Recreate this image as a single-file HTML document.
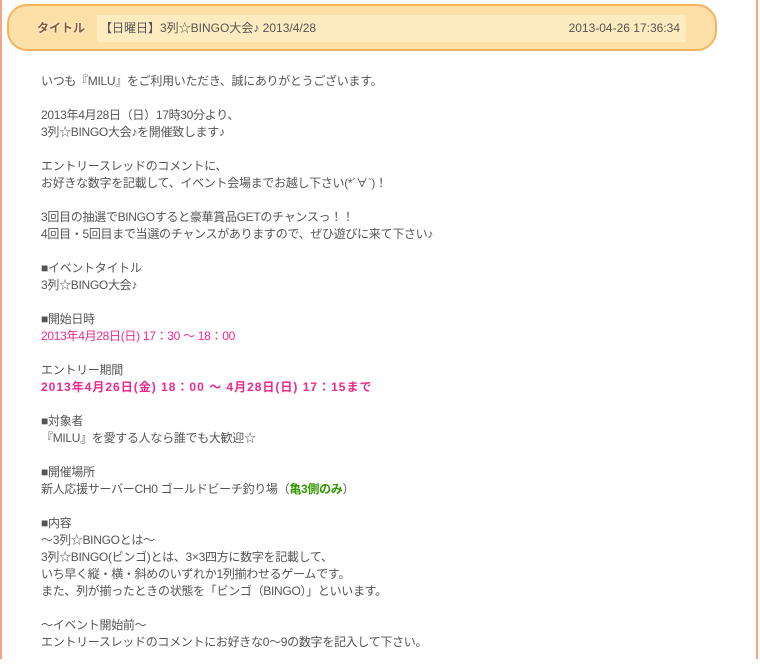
<!DOCTYPE html>
<html><head><meta charset="utf-8"><style>
html,body{margin:0;padding:0;background:#fff;}
body{width:760px;height:659px;overflow:hidden;position:relative;font-family:"Liberation Sans","Noto Sans CJK JP",sans-serif;}
.lb{position:absolute;left:0;top:0;width:2px;height:659px;background:#f4a48a;}
.rb{position:absolute;left:756px;top:0;width:2px;height:659px;background:#f4a48a;}
.hd{position:absolute;left:7px;top:4px;width:706px;height:43px;background:#fddfa8;border:2px solid #f7b35a;border-radius:20px;}
.lab{position:absolute;left:28px;top:13px;font-size:12px;font-weight:bold;color:#8a5a2a;text-shadow:0 0 2px #fff,0 0 2px #fff;}
.in{position:absolute;left:88px;top:9px;width:589px;height:27px;background:#feebbf;font-size:12px;color:#555;line-height:27px;}
.in .t{position:absolute;left:3px;}
.in .d{position:absolute;right:6px;}
.body{position:absolute;left:41px;top:73px;font-size:12px;line-height:17px;color:#555;letter-spacing:-0.3px;}
.body p{margin:0 0 17px 0;}
.pk{color:#f0288c;}
.b{font-weight:bold;letter-spacing:1px;}
.gr{color:#339900;font-weight:bold;}
</style></head><body>
<div class="lb"></div><div class="rb"></div>
<div class="hd"><div class="lab">タイトル</div>
<div class="in"><span class="t">【日曜日】3列☆BINGO大会♪ 2013/4/28</span><span class="d">2013-04-26 17:36:34</span></div></div>
<div class="body">
<p>いつも『MILU』をご利用いただき、誠にありがとうございます。</p>
<p>2013年4月28日（日）17時30分より、<br>3列☆BINGO大会♪を開催致します♪</p>
<p>エントリースレッドのコメントに、<br>お好きな数字を記載して、イベント会場までお越し下さい(*´∀`)！</p>
<p>3回目の抽選でBINGOすると豪華賞品GETのチャンスっ！！<br>4回目・5回目まで当選のチャンスがありますので、ぜひ遊びに来て下さい♪</p>
<p>■イベントタイトル<br>3列☆BINGO大会♪</p>
<p>■開始日時<br><span class="pk">2013年4月28日(日) 17：30 ～ 18：00</span></p>
<p>エントリー期間<br><span class="pk b">2013年4月26日(金) 18：00 ～ 4月28日(日) 17：15まで</span></p>
<p>■対象者<br>『MILU』を愛する人なら誰でも大歓迎☆</p>
<p>■開催場所<br>新人応援サーバーCH0 ゴールドビーチ釣り場（<span class="gr">亀3側のみ</span>）</p>
<p>■内容<br>～3列☆BINGOとは～<br>3列☆BINGO(ビンゴ)とは、3×3四方に数字を記載して、<br>いち早く縦・横・斜めのいずれか1列揃わせるゲームです。<br>また、列が揃ったときの状態を「ビンゴ（BINGO）」といいます。</p>
<p>～イベント開始前～<br>エントリースレッドのコメントにお好きな0～9の数字を記入して下さい。</p>
</div>
</body></html>
